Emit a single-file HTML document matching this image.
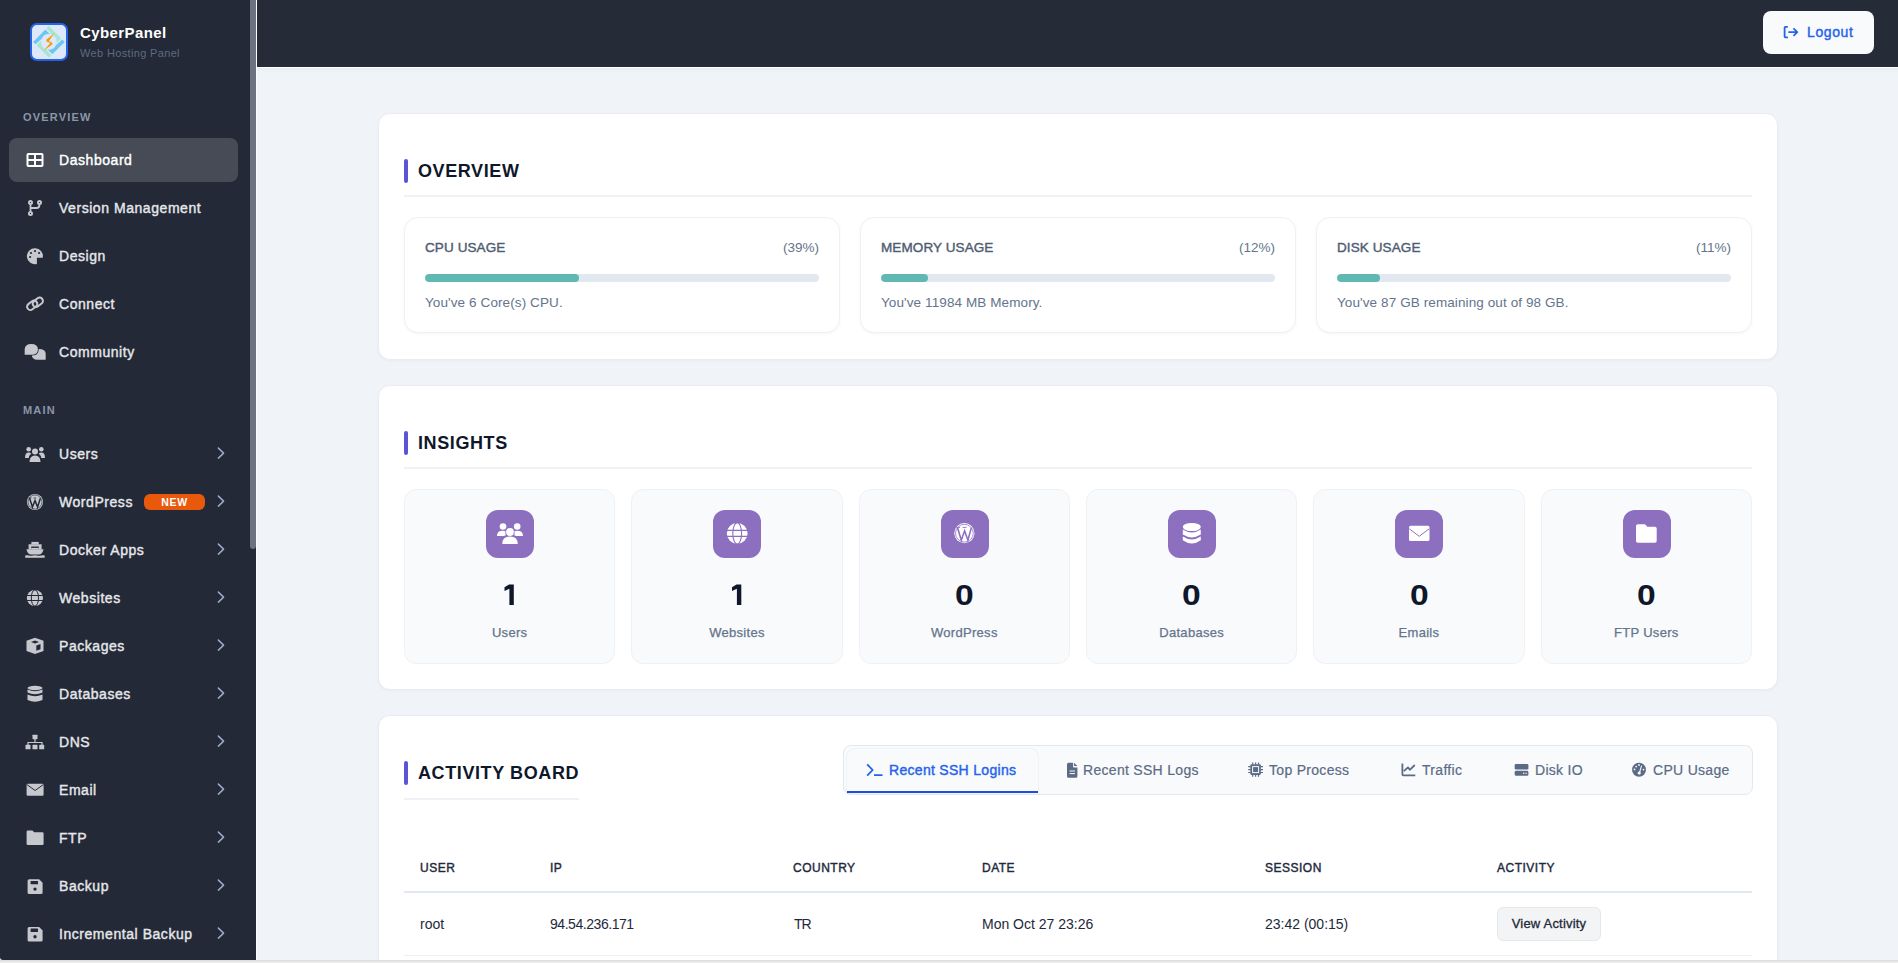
<!DOCTYPE html>
<html><head><meta charset="utf-8">
<style>
*{box-sizing:border-box;margin:0;padding:0}
html,body{width:1898px;height:963px;overflow:hidden}
body{font-family:"Liberation Sans",sans-serif;background:#f0f3f8;position:relative;color:#0f172a}
.abs{position:absolute}
#sb{left:0;top:0;width:256px;height:960px;background:#232936;border-bottom-left-radius:3px;overflow:hidden}
#sbline{left:256px;top:0;width:1px;height:960px;background:#fbfcfe}
#thumb{left:250px;top:0;width:6px;height:549px;background:#6b7280;border-radius:0 0 3px 3px}
#hdr{left:257px;top:0;width:1641px;height:67px;background:#252b37}
#hdrline{left:257px;top:67px;width:1641px;height:1px;background:#fff}
#hdrsh{left:257px;top:68px;width:1641px;height:4px;background:linear-gradient(#e8ebf0,#f0f3f8)}
#btm{left:0;top:960px;width:1898px;height:3px;background:linear-gradient(#d9d9d9,#f3f3f3)}
.brand{left:80px;top:24px;color:#fff;font-weight:bold;font-size:15px;white-space:nowrap;letter-spacing:.4px}
.brand2{left:80px;top:47px;color:#5d6b82;font-size:11px;white-space:nowrap;letter-spacing:.35px}
.sec{left:23px;color:#8a97a8;font-size:11px;font-weight:bold;letter-spacing:1.2px}
.nav{left:9px;width:229px;height:44px;border-radius:8px}
.nav.act{background:#464b55}
.nav .ic{position:absolute;left:16px;top:13px;width:20px;height:18px}
.nav .tx{position:absolute;left:50px;top:14px;font-size:14px;font-weight:normal;color:#e5e7eb;white-space:nowrap;letter-spacing:.55px;-webkit-text-stroke:.4px #e5e7eb}
.nav.act .tx{-webkit-text-stroke:.4px #fff}
.nav.act .tx{color:#fff}
.nav .chev{position:absolute;left:207px;top:16px;width:8px;height:12px}
.badge{position:absolute;left:135px;top:14px;width:61px;height:16px;border-radius:6px;background:#e8590c;color:#fff;font-size:10.5px;font-weight:bold;text-align:center;line-height:16px;letter-spacing:.7px}

.card{background:#fff;border-radius:12px;left:378px;width:1400px;border:1px solid #e9edf3;box-shadow:0 1px 3px rgba(15,23,42,.04)}
.ttl{position:absolute;left:25px;margin-top:-1px;font-size:18px;font-weight:bold;color:#0f172a;padding-left:14px;white-space:nowrap;letter-spacing:.6px}
.ttl:before{content:"";position:absolute;left:0;top:-2px;width:4px;height:24px;background:#5b55d6;border-radius:2px}
.sep{position:absolute;left:25px;width:1348px;height:2px;background:#eef1f6}
.stat{position:absolute;top:103px;width:436px;height:116px;border:1px solid #edf1f5;border-radius:14px;background:#fff;box-shadow:0 1px 3px rgba(15,23,42,.04)}
.stat .lb{position:absolute;left:20px;top:22px;font-size:13.5px;font-weight:normal;color:#4e5c72;letter-spacing:.1px;-webkit-text-stroke:.4px currentColor}
.stat .pc{position:absolute;right:20px;top:22px;font-size:13.5px;color:#64748b}
.stat .bar{position:absolute;left:20px;top:56px;width:394px;height:8px;border-radius:4px;background:#e2e8f0;overflow:hidden}
.stat .fill{height:8px;border-radius:4px;background:#5fb8b2}
.stat .ds{position:absolute;left:20px;top:77px;font-size:13.5px;color:#64748b;white-space:nowrap;letter-spacing:.1px}

.ins{position:absolute;top:103px;width:211.3px;height:175px;background:#f8fafc;border:1px solid #eef2f6;border-radius:12px}
.ins .ib{position:absolute;left:81px;top:20px;width:48px;height:48px;border-radius:12px;background:#8c6fbf}
.ins .num{position:absolute;left:0;width:100%;top:89px;text-align:center;font-size:30px;font-weight:bold;color:#0f172a;line-height:32px}
.ins .il{position:absolute;left:0;width:100%;top:135px;text-align:center;font-size:13px;color:#64748b;letter-spacing:.3px;-webkit-text-stroke:.25px currentColor}
.tabs{position:absolute;left:464px;top:29px;width:910px;height:50px;background:#f8fafc;border:1px solid #e2e8f0;border-radius:8px}
.tab{position:absolute;left:468px;top:33px;width:191px;height:44px;background:#f8fafc;border-radius:8px 8px 0 0;border-bottom:2px solid #1d4ed8;box-shadow:0 0 2px rgba(30,41,59,.12)}
.tt{font-size:14px;color:#5a6b85;white-space:nowrap;letter-spacing:.3px;-webkit-text-stroke:.2px currentColor}
.th{top:861px;font-size:12px;font-weight:normal;color:#1e293b;letter-spacing:.5px;-webkit-text-stroke:.4px currentColor}
.td{top:916px;font-size:14px;color:#1e293b;white-space:nowrap}
.vbtn{left:1497px;top:907px;width:104px;height:34px;border:1px solid #e5e7eb;border-radius:6px;background:#f3f4f6;font-size:13px;font-weight:normal;color:#1f2937;text-align:center;line-height:31px;letter-spacing:.2px;-webkit-text-stroke:.3px currentColor}
</style></head><body>
<div id="sb" class="abs"></div>
<div id="thumb" class="abs"></div>
<div id="sbline" class="abs"></div>
<div id="hdr" class="abs"></div>
<div id="hdrline" class="abs"></div>
<div id="hdrsh" class="abs"></div>

<!-- brand -->
<div class="abs brand">CyberPanel</div>
<div class="abs brand2">Web Hosting Panel</div>

<div class="abs sec" style="top:111px">OVERVIEW</div>
<div class="abs nav act" style="top:138px"><div class="tx">Dashboard</div></div>
<div class="abs nav" style="top:186px"><div class="tx">Version Management</div></div>
<div class="abs nav" style="top:234px"><div class="tx">Design</div></div>
<div class="abs nav" style="top:282px"><div class="tx">Connect</div></div>
<div class="abs nav" style="top:330px"><div class="tx">Community</div></div>
<div class="abs sec" style="top:404px">MAIN</div>
<div class="abs nav" style="top:432px"><div class="tx">Users</div></div>
<div class="abs nav" style="top:480px"><div class="tx">WordPress</div><div class="badge">NEW</div></div>
<div class="abs nav" style="top:528px"><div class="tx">Docker Apps</div></div>
<div class="abs nav" style="top:576px"><div class="tx">Websites</div></div>
<div class="abs nav" style="top:624px"><div class="tx">Packages</div></div>
<div class="abs nav" style="top:672px"><div class="tx">Databases</div></div>
<div class="abs nav" style="top:720px"><div class="tx">DNS</div></div>
<div class="abs nav" style="top:768px"><div class="tx">Email</div></div>
<div class="abs nav" style="top:816px"><div class="tx">FTP</div></div>
<div class="abs nav" style="top:864px"><div class="tx">Backup</div></div>
<div class="abs nav" style="top:912px"><div class="tx">Incremental Backup</div></div>

<svg class="abs" style="left:0;top:0" width="256" height="960" viewBox="0 0 256 960">
<defs>
<g id="floppy"><path d="M27.6,1.5 a1.5,1.5 0 0 1 1.5,-1.5 h10 l3.5,3.5 v9.6 a1.5,1.5 0 0 1 -1.5,1.5 h-12 a1.5,1.5 0 0 1 -1.5,-1.5z" fill="#c6c8cd"/><rect x="30.6" y="1.6" width="7.4" height="3.3" rx=".5" fill="#232936"/><circle cx="35" cy="9.8" r="1.7" fill="#232936"/></g>
</defs>
<!-- logo -->
<g>
 <rect x="31" y="24" width="36" height="36" rx="6" fill="#dde9fb" stroke="#2563eb" stroke-width="2"/>
 <g transform="translate(48.9,41.9) rotate(-45)">
  <defs><path id="lgb" d="M-11.2,-11.2 H6.3 V-4.6 A7.8 7.8 0 0 0 -2.8,-7.3 L-11.2,-7.7 Z"/></defs>
  <use href="#lgb" fill="#6cc7f0"/>
  <use href="#lgb" transform="rotate(90)" fill="#a8e6cf"/>
  <use href="#lgb" transform="rotate(180)" fill="#6cc7f0"/>
  <use href="#lgb" transform="rotate(270)" fill="#a8e6cf"/>
 </g>
 <path d="M54.2,33.3 L46.2,39.8 Q45.8,41.5 47.5,42 L50.3,42.9 L43.8,50.7 L52.2,44.5 Q53,43.2 51.5,42.3 L48.9,41.3 Z" fill="#f89a0c"/>
</g>
<!-- dashboard grid -->
<g fill="none" stroke="#fff" stroke-width="2"><rect x="27.5" y="154" width="15" height="12" rx=".8"/><path d="M35,154 V166 M27.5,160 H42.5"/></g>
<g fill="#c6c8cd" stroke="none">
<!-- version -->
<g fill="none" stroke="#c6c8cd"><g stroke-width="1.9"><circle cx="30.5" cy="202.5" r="1.55"/><circle cx="39.5" cy="202.5" r="1.55"/><circle cx="30.5" cy="213.4" r="1.55"/></g><path d="M30.5,204.2 V211.7 M39.4,204.2 V205 Q39.4,208 36.6,208 H30.5" stroke-width="1.8"/></g>
<!-- palette -->
<path d="M42.7,257.8 H36.9 V263.9 A8 8 0 1 1 42.7,257.8Z"/>
<g fill="#232936"><circle cx="31" cy="253" r="1.1"/><circle cx="35" cy="251" r="1.1"/><circle cx="39.1" cy="253" r="1.1"/><circle cx="30.1" cy="257" r="1.1"/></g>
<!-- link -->
<g fill="none" stroke="#c6c8cd" stroke-width="2"><rect x="-5.6" y="-3.3" width="11.2" height="6.6" rx="3.3" transform="translate(32.2,305.3) rotate(-38)"/><rect x="-5.6" y="-3.3" width="11.2" height="6.6" rx="3.3" transform="translate(37.8,302.3) rotate(-38)"/></g>
<!-- comments -->
<path d="M31.7,354 Q31.7,348.9 38.7,348.9 Q45.7,348.9 45.7,354 V359.8 H37.5 Q31.7,359.8 31.7,354Z"/>
<path d="M24.7,349.4 Q24.7,343.9 31.3,343.9 Q37.9,343.9 37.9,349.4 Q37.9,354.8 31.3,354.8 H24.7Z" stroke="#232936" stroke-width="1.6" paint-order="stroke"/>
<!-- users -->
<circle cx="35" cy="451.5" r="3"/><path d="M29.5,462 Q29.5,455.5 35,455.5 Q40.5,455.5 40.5,462Z"/>
<circle cx="28.7" cy="449.3" r="2.3"/><circle cx="41.3" cy="449.3" r="2.3"/>
<path d="M25,458 Q25,452.6 28.7,452.6 Q30.5,452.6 31.3,453.6 Q29,455.5 28.8,458Z"/><path d="M45,458 Q45,452.6 41.3,452.6 Q39.5,452.6 38.7,453.6 Q41,455.5 41.2,458Z"/>
<!-- wordpress -->
<circle cx="35" cy="502" r="8.1"/><circle cx="35" cy="502" r="7" fill="none" stroke="#232936" stroke-width=".6"/>
<path d="M29.6,498.3 L32.4,507 L35,500.6 L37.6,507 L40.4,498.3" fill="none" stroke="#232936" stroke-width="1.5"/>
<path d="M28.6,498 H31.4 M33.6,498 H36.2" stroke="#232936" stroke-width=".8"/>
<!-- docker ship -->
<rect x="31.4" y="541.9" width="7.3" height="2.6"/><path d="M28.6,544.3 H41.6 V549.5 H38.8 V546.4 H31.2 V549.5 H28.6Z"/><rect x="31.2" y="547.9" width="7.6" height="1.6"/><path d="M26.4,549.3 H43.6 Q42.2,554.6 39,554.6 H31 Q27.8,554.6 26.4,549.3Z"/><path d="M25.2,555.5 Q27,554.8 29,555.5 Q31,556.2 33,555.5 Q35,554.8 37,555.5 Q39,556.2 41,555.5 Q43,554.8 44.7,555.5 V557.8 H25.2Z"/>
<!-- globe -->
<circle cx="34.9" cy="598" r="8.1"/><g fill="none" stroke="#232936" stroke-width="1"><path d="M26.5,595.5 H43.5 M26.5,600.5 H43.5"/><ellipse cx="34.9" cy="598" rx="3.6" ry="8.1"/></g>
<!-- cube -->
<path d="M35,637.8 L43.5,640.8 V651 L35,654 L26.5,651 V640.8Z"/><path d="M31,642 L35,640.6 L39,642 L35,643.4Z" fill="#232936"/><path d="M36.3,645.5 L40.5,644 V649.3 L36.3,650.8Z" fill="#232936"/>
<!-- database -->
<ellipse cx="35" cy="688" rx="7.5" ry="2.2"/><path d="M27.5,689.5 Q35,693 42.5,689.5 V692.6 Q35,696 27.5,692.6Z"/><path d="M27.5,694.5 Q35,698 42.5,694.5 V700 Q35,703.5 27.5,700Z"/>
<!-- sitemap -->
<rect x="32.5" y="734.7" width="5" height="4.5" rx=".6"/><path d="M35,739 V742.5 M28,745 V742.5 H42 V745" fill="none" stroke="#c6c8cd" stroke-width="1.2"/><rect x="25.5" y="744.8" width="5" height="4.5" rx=".6"/><rect x="32.5" y="744.8" width="5" height="4.5" rx=".6"/><rect x="39.2" y="744.8" width="5" height="4.5" rx=".6"/>
<!-- envelope -->
<rect x="26.6" y="783.8" width="17" height="12" rx="1.2"/><path d="M26.8,784.5 L35.1,790.5 L43.4,784.5" fill="none" stroke="#232936" stroke-width="1"/>
<!-- folder -->
<path d="M26.6,831.8 a1.3,1.3 0 0 1 1.3,-1.3 h4.5 l1.8,1.8 h8.1 a1.3,1.3 0 0 1 1.3,1.3 v10.1 a1.3,1.3 0 0 1 -1.3,1.3 h-14.4 a1.3,1.3 0 0 1 -1.3,-1.3z"/>
<use href="#floppy" transform="translate(0,879.3)"/>
<use href="#floppy" transform="translate(0,927)"/>
</g>
<!-- chevrons -->
<g fill="none" stroke="#98abc6" stroke-width="1.5" stroke-linecap="round" stroke-linejoin="round">
<path d="M218.4,448.1 L223.6,453.1 L218.4,458.1"/>
<path d="M218.4,496.1 L223.6,501.1 L218.4,506.1"/>
<path d="M218.4,544.1 L223.6,549.1 L218.4,554.1"/>
<path d="M218.4,592.1 L223.6,597.1 L218.4,602.1"/>
<path d="M218.4,640.1 L223.6,645.1 L218.4,650.1"/>
<path d="M218.4,688.1 L223.6,693.1 L218.4,698.1"/>
<path d="M218.4,736.1 L223.6,741.1 L218.4,746.1"/>
<path d="M218.4,784.1 L223.6,789.1 L218.4,794.1"/>
<path d="M218.4,832.1 L223.6,837.1 L218.4,842.1"/>
<path d="M218.4,880.1 L223.6,885.1 L218.4,890.1"/>
<path d="M218.4,928.1 L223.6,933.1 L218.4,938.1"/>
</g>
</svg>

<!-- OVERVIEW card -->
<div class="abs card" style="top:113px;height:247px">
  <div class="ttl" style="top:48px">OVERVIEW</div>
  <div class="sep" style="top:81px"></div>
  <div class="stat" style="left:25px"><div class="lb">CPU USAGE</div><div class="pc">(39%)</div><div class="bar"><div class="fill" style="width:39%"></div></div><div class="ds">You've 6 Core(s) CPU.</div></div>
  <div class="stat" style="left:481px"><div class="lb">MEMORY USAGE</div><div class="pc">(12%)</div><div class="bar"><div class="fill" style="width:12%"></div></div><div class="ds">You've 11984 MB Memory.</div></div>
  <div class="stat" style="left:937px"><div class="lb">DISK USAGE</div><div class="pc">(11%)</div><div class="bar"><div class="fill" style="width:11%"></div></div><div class="ds">You've 87 GB remaining out of 98 GB.</div></div>
</div>


<!-- INSIGHTS card -->
<div class="abs card" style="top:385px;height:305px">
  <div class="ttl" style="top:48px">INSIGHTS</div>
  <div class="sep" style="top:81px"></div>
  <div class="ins" style="left:25px"><div class="ib"></div><div class="num"></div><div class="il">Users</div></div>
  <div class="ins" style="left:252.3px"><div class="ib"></div><div class="num"></div><div class="il">Websites</div></div>
  <div class="ins" style="left:479.7px"><div class="ib"></div><div class="num"><span style="display:inline-block;transform:scaleX(1.12)">0</span></div><div class="il">WordPress</div></div>
  <div class="ins" style="left:707px"><div class="ib"></div><div class="num"><span style="display:inline-block;transform:scaleX(1.12)">0</span></div><div class="il">Databases</div></div>
  <div class="ins" style="left:934.3px"><div class="ib"></div><div class="num"><span style="display:inline-block;transform:scaleX(1.12)">0</span></div><div class="il">Emails</div></div>
  <div class="ins" style="left:1161.7px"><div class="ib"></div><div class="num"><span style="display:inline-block;transform:scaleX(1.12)">0</span></div><div class="il">FTP Users</div></div>
</div>

<!-- ACTIVITY card -->
<div class="abs card" style="top:715px;height:300px">
  <div class="ttl" style="top:48px">ACTIVITY BOARD</div>
  <div class="sep" style="top:82px;width:175px"></div>
  <div class="tabs"></div>
  <div class="tab act"></div>
</div>
<div class="abs tt" style="left:889px;top:762px;color:#2563eb;letter-spacing:.3px;-webkit-text-stroke:.4px currentColor">Recent SSH Logins</div>
<div class="abs tt" style="left:1083px;top:762px">Recent SSH Logs</div>
<div class="abs tt" style="left:1269px;top:762px">Top Process</div>
<div class="abs tt" style="left:1422px;top:762px">Traffic</div>
<div class="abs tt" style="left:1535px;top:762px">Disk IO</div>
<div class="abs tt" style="left:1653px;top:762px">CPU Usage</div>

<div class="abs th" style="left:420px">USER</div>
<div class="abs th" style="left:550px">IP</div>
<div class="abs th" style="left:793px">COUNTRY</div>
<div class="abs th" style="left:982px">DATE</div>
<div class="abs th" style="left:1265px">SESSION</div>
<div class="abs th" style="left:1497px">ACTIVITY</div>
<div class="abs" style="left:404px;top:891px;width:1348px;height:2px;background:#e2e8f0"></div>
<div class="abs td" style="left:420px">root</div>
<div class="abs td" style="left:550px;letter-spacing:-.45px">94.54.236.171</div>
<div class="abs td" style="left:794px;letter-spacing:-1px">TR</div>
<div class="abs td" style="left:982px">Mon Oct 27 23:26</div>
<div class="abs td" style="left:1265px">23:42 (00:15)</div>
<div class="abs vbtn">View Activity</div>
<div class="abs" style="left:404px;top:955px;width:1348px;height:1px;background:#eef2f6"></div>

<!-- logout -->
<div class="abs" style="left:1763px;top:11px;width:111px;height:43px;border-radius:8px;background:#f8fafc"></div>
<div class="abs" style="left:1807px;top:24px;font-size:14px;font-weight:normal;color:#2563eb;letter-spacing:.6px;-webkit-text-stroke:.4px currentColor">Logout</div>

<svg class="abs" style="left:0;top:0;pointer-events:none" width="1898" height="963" viewBox="0 0 1898 963">
<g fill="#fff">
<!-- users -->
<circle cx="510" cy="532" r="3.9"/><path d="M502.3,544 Q502.3,536.6 510,536.6 Q517.7,536.6 517.7,544Z"/>
<circle cx="503" cy="526.5" r="3.3"/><circle cx="517.2" cy="526.5" r="3.3"/>
<path d="M497,536 Q497,530.8 502.6,530.8 Q504.8,530.8 505.8,531.6 Q504.8,533.5 505.8,535.2 Q504.6,535.5 504.2,536Z"/>
<path d="M523,536 Q523,530.8 517.4,530.8 Q515.2,530.8 514.2,531.6 Q515.2,533.5 514.2,535.2 Q515.4,535.5 515.8,536Z"/>
<!-- globe -->
<circle cx="737.2" cy="533.4" r="10.4"/>
<g fill="none" stroke="#8c6fbf" stroke-width="1.1"><path d="M726,530.4 H748.5 M726,536.4 H748.5"/><ellipse cx="737.2" cy="533.4" rx="4.4" ry="10.6"/></g>
<!-- wordpress -->
<circle cx="964.4" cy="533.2" r="10.1"/><circle cx="964.4" cy="533.2" r="8.9" fill="none" stroke="#8c6fbf" stroke-width=".8"/>
<path d="M957.5,527.6 L961.3,540.2 L964.6,530.8 L967.9,540.2 L971.4,527.6" fill="none" stroke="#8c6fbf" stroke-width="1.6"/>
<path d="M956.3,527.4 H960.2 M962.5,527.4 H966.5" stroke="#8c6fbf" stroke-width=".9"/>
<!-- database -->
<ellipse cx="1191.8" cy="527" rx="9" ry="4.1"/>
<path d="M1182.8,529.6 Q1191.8,535.6 1200.8,529.6 V534.6 Q1191.8,540.2 1182.8,534.6Z"/>
<path d="M1182.8,536.6 Q1191.8,542.4 1200.8,536.6 V540.2 Q1191.8,546.6 1182.8,540.2Z"/>
<!-- envelope -->
<rect x="1409" y="525.8" width="20.5" height="15.2" rx="1.6"/>
<path d="M1409.3,528.8 L1419.2,536.3 L1429.2,528.8" fill="none" stroke="#8c6fbf" stroke-width="1"/>
<!-- folder -->
<path d="M1636,526 a1.8,1.8 0 0 1 1.8,-1.8 h7.2 l2.4,2.6 h7.5 a1.8,1.8 0 0 1 1.8,1.8 v12.3 a1.8,1.8 0 0 1 -1.8,1.8 h-17.1 a1.8,1.8 0 0 1 -1.8,-1.8z"/>
</g>
<!-- digit 1 -->
<g fill="#0f172a"><path d="M736.5,584.6 H741.3 V604.9 H736.9 V588.8 L732,591.1 V587.2 Z"/><path d="M509,584.6 H513.8 V604.9 H509.4 V588.8 L504.5,591.1 V587.2 Z"/></g>
<!-- tab icons -->
<path d="M867.2,764.3 L872.6,770 L867.2,775.7 M874,775.2 H882.5" fill="none" stroke="#2563eb" stroke-width="1.8"/>
<g fill="#5b6b85">
<path d="M1067,764.3 a1.5,1.5 0 0 1 1.5,-1.5 h4.6 v4 a.8,.8 0 0 0 .8,.8 h3.5 v8.7 a1.5,1.5 0 0 1 -1.5,1.5 h-7.4 a1.5,1.5 0 0 1 -1.5,-1.5z M1074.1,762.8 l3.3,3.3 h-3.3z"/>
<path d="M1069.6,771 H1075 M1069.6,773.6 H1075" stroke="#f8fafc" stroke-width="1"/>
<rect x="1250.3" y="764.3" width="10.6" height="10.6" rx="1.3"/>
<path d="M1252.7,762.6 v2 M1255.6,762.6 v2 M1258.5,762.6 v2 M1252.7,774.6 v2.2 M1255.6,774.6 v2.2 M1258.5,774.6 v2.2 M1248.2,766.7 h2.3 M1248.2,769.6 h2.3 M1248.2,772.5 h2.3 M1260.7,766.7 h2.3 M1260.7,769.6 h2.3 M1260.7,772.5 h2.3" stroke="#5b6b85" stroke-width="1.2"/>
<rect x="1252.6" y="766.6" width="6" height="6" fill="none" stroke="#f8fafc" stroke-width="1"/>
<path d="M1402.4,763.6 V774.3 Q1402.4,775.3 1403.4,775.3 H1415.3" fill="none" stroke="#5b6b85" stroke-width="1.8"/>
<path d="M1404.4,770.7 L1408,767.4 L1409.8,769.8 L1414.3,765.5" fill="none" stroke="#5b6b85" stroke-width="1.8" stroke-linecap="round" stroke-linejoin="round"/>
<rect x="1514.7" y="763.9" width="13.7" height="5.7" rx="1.4"/>
<rect x="1514.7" y="770.8" width="13.7" height="5" rx="1.4"/>
<circle cx="1523.7" cy="773.3" r=".75" fill="#f8fafc"/><circle cx="1526.1" cy="773.3" r=".75" fill="#f8fafc"/>
<circle cx="1639" cy="769.7" r="7"/>
<g fill="#f8fafc"><circle cx="1636.2" cy="766.6" r=".9"/><circle cx="1639" cy="765" r=".9"/><circle cx="1634.5" cy="769.4" r=".9"/><circle cx="1643.5" cy="769.6" r=".9"/><circle cx="1639.2" cy="773" r="1.6"/></g>
<path d="M1639.4,773 L1641.6,765.6" stroke="#f8fafc" stroke-width="1.1"/>
</g>
<!-- logout icon -->
<g fill="none" stroke="#2563eb" stroke-width="1.8" stroke-linecap="round" stroke-linejoin="round">
<path d="M1787.2,26.8 H1785.4 Q1784.6,26.8 1784.6,27.6 V36.6 Q1784.6,37.4 1785.4,37.4 H1787.2"/>
<path d="M1789,32.1 H1797.3 M1794,28.8 L1797.3,32.1 L1794,35.4"/>
</g>
</svg>
<div id="btm" class="abs"></div>
</body></html>
